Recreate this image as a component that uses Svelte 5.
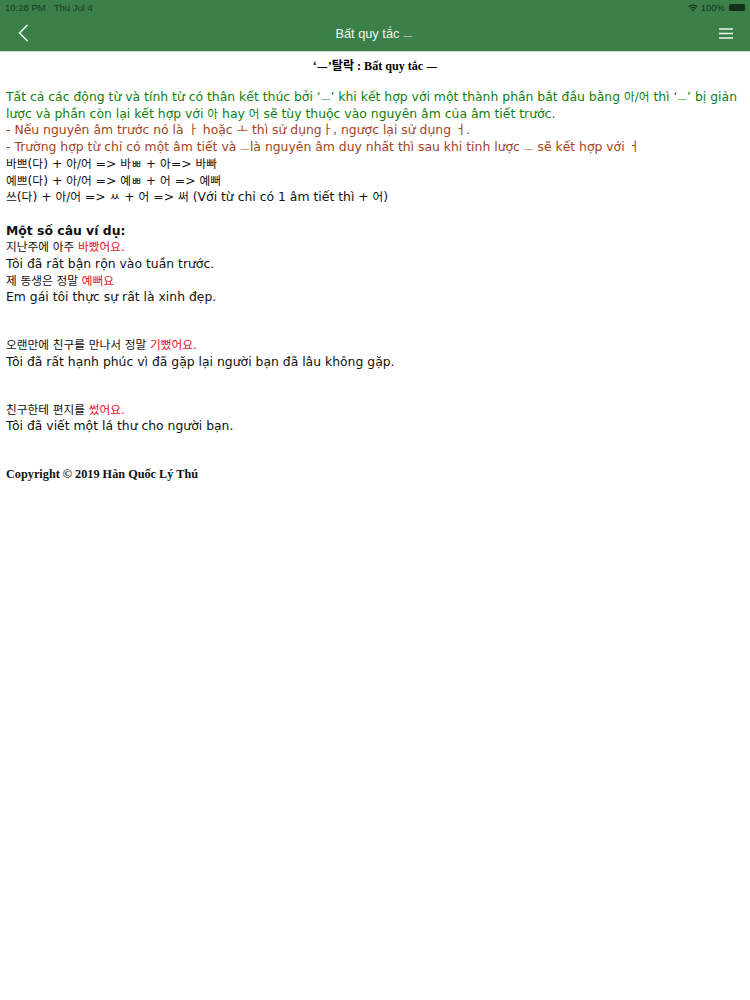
<script lang="ts">
  const examples = [
    { ko: '지난주에 아주 ', hi: '바빴어요.', vi: 'Tôi đã rất bận rộn vào tuần trước.' },
    { ko: '제 동생은 정말 ', hi: '예뻐요', vi: 'Em gái tôi thực sự rất là xinh đẹp.' },
  ];
  const later = [
    { ko: '오랜만에 친구를 만나서 정말 ', hi: '기뻤어요.', vi: 'Tôi đã rất hạnh phúc vì đã gặp lại người bạn đã lâu không gặp.' },
    { ko: '친구한테 편지를 ', hi: '썼어요.', vi: 'Tôi đã viết một lá thư cho người bạn.' },
  ];
</script>

<svelte:head>
  <title>Bất quy tắc ㅡ</title>
</svelte:head>

<header class="top">
  <div class="status">
    <span class="status-time">10:28 PM</span>
    <span class="status-date">Thu Jul 4</span>
    <span class="status-right">
      <svg class="wifi" width="13" height="10" viewBox="0 0 13 10" aria-hidden="true">
        <path d="M6.5 9.6 4.6 7.3a3 3 0 0 1 3.8 0Z" fill="currentColor" />
        <path d="M3.6 6.2 2.6 5a6 6 0 0 1 7.8 0l-1 1.2a4.5 4.5 0 0 0-5.8 0Z" fill="currentColor" />
        <path d="M1.6 3.9.5 2.7a9.2 9.2 0 0 1 12 0l-1.1 1.2a7.6 7.6 0 0 0-9.800 0Z" fill="currentColor" />
      </svg>
      <span>100%</span>
      <span class="battery"></span>
    </span>
  </div>
  <nav class="bar">
    <svg class="back" width="11" height="18" viewBox="0 0 11 18" aria-hidden="true">
      <path d="M9.500 1 1.500 9l8 8" fill="none" stroke="currentColor" stroke-width="1.500" />
    </svg>
    <span class="title">Bất quy tắc <span class="dash">ㅡ</span></span>
    <svg class="menu" width="14" height="11" viewBox="0 0 14 11" aria-hidden="true">
      <path d="M0 1h14M0 5.500h14M0 10h14" fill="none" stroke="currentColor" stroke-width="1.700" />
    </svg>
  </nav>
</header>

<main class="content">
  <h1 class="heading">‘<span class="dash wide">ㅡ</span>’탈락 : Bất quy tắc <span class="dash wide">ㅡ</span></h1>

  <p class="rule green">Tất cả các động từ và tính từ có thân kết thúc bởi ‘<span class="dash">ㅡ</span>’ khi kết hợp với một thành phần bắt đầu bằng <span class="ko">아/어</span> thì ‘<span class="dash">ㅡ</span>’ bị giản lược và phần còn lại kết hợp với <span class="ko">아</span> hay <span class="ko">어</span> sẽ tùy thuộc vào nguyên âm của âm tiết trước.</p>
  <p class="rule brown">- Nếu nguyên âm trước nó là ㅏ hoặc ㅗ thì sử dụngㅏ, ngược lại sử dụng ㅓ.</p>
  <p class="rule brown">- Trường hợp từ chỉ có một âm tiết và <span class="dash">ㅡ</span>là nguyên âm duy nhất thì sau khi tỉnh lược <span class="dash">ㅡ</span> sẽ kết hợp với ㅓ</p>
  <p class="rule"><span class="ko">바쁘</span>(<span class="ko">다</span>) + <span class="ko">아/어</span> =&gt; <span class="ko">바ㅃ</span> + <span class="ko">아</span>=&gt; <span class="ko">바빠</span></p>
  <p class="rule"><span class="ko">예쁘</span>(<span class="ko">다</span>) + <span class="ko">아/어</span> =&gt; <span class="ko">예ㅃ</span> + <span class="ko">어</span> =&gt; <span class="ko">예뻐</span></p>
  <p class="rule"><span class="ko">쓰</span>(<span class="ko">다</span>) + <span class="ko">아/어</span> =&gt; <span class="ko">ㅆ</span> + <span class="ko">어</span> =&gt; <span class="ko">써</span> (Với từ chỉ có 1 âm tiết thì + <span class="ko">어</span>)</p>

  <h2 class="sub">Một số câu ví dụ:</h2>
  {#each examples as ex}
    <p class="rule"><span class="ko">{ex.ko}</span><span class="ko red">{ex.hi}</span></p>
    <p class="rule">{ex.vi}</p>
  {/each}

  {#each later as ex}
    <div class="spaced">
      <p class="rule"><span class="ko">{ex.ko}</span><span class="ko red">{ex.hi}</span></p>
      <p class="rule">{ex.vi}</p>
    </div>
  {/each}

  <p class="copyright">Copyright © 2019 Hàn Quốc Lý Thú</p>
</main>

<style>
  :global(body) {
    background: #fff;
  }

  .top {
    background: #3a8048;
    color: #fff;
    height: 51px;
    box-shadow: 0 1px 1px rgba(0, 0, 0, 0.15);
    font-family: "Liberation Sans", Arial, "Noto Sans CJK KR", sans-serif;
  }

  /* --- Status bar --- */
  .status {
    display: flex;
    align-items: center;
    height: 15px;
    padding: 0 5px;
    font-size: 9.5px;
    color: #1c3a22;
  }

  .status-date {
    margin-left: 8px;
  }

  .status-right {
    margin-left: auto;
    display: flex;
    align-items: center;
    gap: 3px;
    color: #14301a;
  }

  .wifi {
    width: 10px;
    height: 8px;
  }

  .battery {
    width: 16px;
    height: 7px;
    background: #14301a;
    border-radius: 1.5px;
    margin-left: 1px;
  }

  /* --- Nav bar --- */
  .bar {
    display: flex;
    align-items: center;
    justify-content: space-between;
    height: 36px;
    padding: 0 17px 0 18px;
    box-sizing: border-box;
  }

  .back {
    color: #f2f7f3;
  }

  .menu {
    color: #f2f7f3;
  }

  .title {
    font-size: 12.8px;
    color: #f2f7f3;
  }

  /* --- Content --- */
  .content {
    padding: 0 6px;
    font-family: "DejaVu Sans", Verdana, "Noto Sans CJK KR", sans-serif;
    font-size: 12.4px;
    line-height: 16.7px;
    color: #111;
  }

  .heading {
    margin: 0;
    padding-top: 7px;
    text-align: center;
    font-family: "Liberation Serif", "Noto Sans CJK KR", serif;
    font-size: 12.1px;
    font-weight: bold;
    line-height: 16px;
    color: #000;
    height: 31px;
  }

  .rule {
    margin: 0;
  }

  .ko {
    font-size: 11.7px;
    line-height: 1;
  }

  .dash {
    font-family: "Noto Sans CJK KR", sans-serif;
    font-size: 10.5px;
    font-weight: 300;
    line-height: 0;
    vertical-align: -2.500px;
  }

  .dash.wide {
    font-size: 12px;
    font-weight: 500;
  }

  .green {
    color: #0f800f;
  }

  .brown {
    color: #a3441c;
  }

  .red {
    color: #e8101c;
  }

  .sub {
    margin: 16.7px 0 0;
    font-size: 12.4px;
    line-height: 16.7px;
    font-weight: bold;
  }

  .spaced {
    margin-top: 31px;
  }

  .copyright {
    margin: 31px 0 0;
    font-family: "Liberation Serif", serif;
    font-size: 12.25px;
    font-weight: bold;
    color: #111;
  }
</style>
